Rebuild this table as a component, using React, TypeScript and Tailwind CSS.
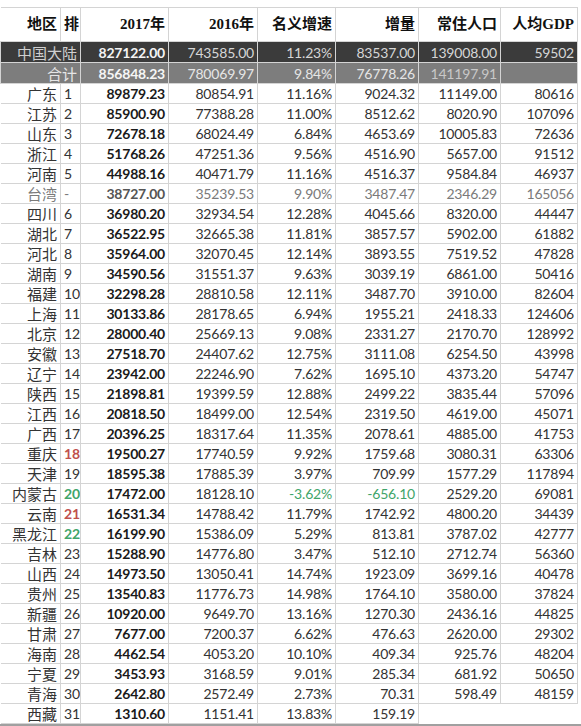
import React from "react"

type Row = {
  name: string
  rank: string
  rankColor?: "red" | "green"
  y2017: string
  y2016: string
  growth: string
  inc: string
  pop: string
  gdp: string
  muted?: boolean
  negative?: boolean
}

const rows: Row[] = [
  { name: "广东", rank: "1", y2017: "89879.23", y2016: "80854.91", growth: "11.16%", inc: "9024.32", pop: "11149.00", gdp: "80616" },
  { name: "江苏", rank: "2", y2017: "85900.90", y2016: "77388.28", growth: "11.00%", inc: "8512.62", pop: "8020.90", gdp: "107096" },
  { name: "山东", rank: "3", y2017: "72678.18", y2016: "68024.49", growth: "6.84%", inc: "4653.69", pop: "10005.83", gdp: "72636" },
  { name: "浙江", rank: "4", y2017: "51768.26", y2016: "47251.36", growth: "9.56%", inc: "4516.90", pop: "5657.00", gdp: "91512" },
  { name: "河南", rank: "5", y2017: "44988.16", y2016: "40471.79", growth: "11.16%", inc: "4516.37", pop: "9584.84", gdp: "46937" },
  { name: "台湾", rank: "-", y2017: "38727.00", y2016: "35239.53", growth: "9.90%", inc: "3487.47", pop: "2346.29", gdp: "165056", muted: true },
  { name: "四川", rank: "6", y2017: "36980.20", y2016: "32934.54", growth: "12.28%", inc: "4045.66", pop: "8320.00", gdp: "44447" },
  { name: "湖北", rank: "7", y2017: "36522.95", y2016: "32665.38", growth: "11.81%", inc: "3857.57", pop: "5902.00", gdp: "61882" },
  { name: "河北", rank: "8", y2017: "35964.00", y2016: "32070.45", growth: "12.14%", inc: "3893.55", pop: "7519.52", gdp: "47828" },
  { name: "湖南", rank: "9", y2017: "34590.56", y2016: "31551.37", growth: "9.63%", inc: "3039.19", pop: "6861.00", gdp: "50416" },
  { name: "福建", rank: "10", y2017: "32298.28", y2016: "28810.58", growth: "12.11%", inc: "3487.70", pop: "3910.00", gdp: "82604" },
  { name: "上海", rank: "11", y2017: "30133.86", y2016: "28178.65", growth: "6.94%", inc: "1955.21", pop: "2418.33", gdp: "124606" },
  { name: "北京", rank: "12", y2017: "28000.40", y2016: "25669.13", growth: "9.08%", inc: "2331.27", pop: "2170.70", gdp: "128992" },
  { name: "安徽", rank: "13", y2017: "27518.70", y2016: "24407.62", growth: "12.75%", inc: "3111.08", pop: "6254.50", gdp: "43998" },
  { name: "辽宁", rank: "14", y2017: "23942.00", y2016: "22246.90", growth: "7.62%", inc: "1695.10", pop: "4373.20", gdp: "54747" },
  { name: "陕西", rank: "15", y2017: "21898.81", y2016: "19399.59", growth: "12.88%", inc: "2499.22", pop: "3835.44", gdp: "57096" },
  { name: "江西", rank: "16", y2017: "20818.50", y2016: "18499.00", growth: "12.54%", inc: "2319.50", pop: "4619.00", gdp: "45071" },
  { name: "广西", rank: "17", y2017: "20396.25", y2016: "18317.64", growth: "11.35%", inc: "2078.61", pop: "4885.00", gdp: "41753" },
  { name: "重庆", rank: "18", rankColor: "red", y2017: "19500.27", y2016: "17740.59", growth: "9.92%", inc: "1759.68", pop: "3080.31", gdp: "63306" },
  { name: "天津", rank: "19", y2017: "18595.38", y2016: "17885.39", growth: "3.97%", inc: "709.99", pop: "1577.29", gdp: "117894" },
  { name: "内蒙古", rank: "20", rankColor: "green", y2017: "17472.00", y2016: "18128.10", growth: "-3.62%", inc: "-656.10", pop: "2529.20", gdp: "69081", negative: true },
  { name: "云南", rank: "21", rankColor: "red", y2017: "16531.34", y2016: "14788.42", growth: "11.79%", inc: "1742.92", pop: "4800.20", gdp: "34439" },
  { name: "黑龙江", rank: "22", rankColor: "green", y2017: "16199.90", y2016: "15386.09", growth: "5.29%", inc: "813.81", pop: "3787.02", gdp: "42777" },
  { name: "吉林", rank: "23", y2017: "15288.90", y2016: "14776.80", growth: "3.47%", inc: "512.10", pop: "2712.74", gdp: "56360" },
  { name: "山西", rank: "24", y2017: "14973.50", y2016: "13050.41", growth: "14.74%", inc: "1923.09", pop: "3699.16", gdp: "40478" },
  { name: "贵州", rank: "25", y2017: "13540.83", y2016: "11776.73", growth: "14.98%", inc: "1764.10", pop: "3580.00", gdp: "37824" },
  { name: "新疆", rank: "26", y2017: "10920.00", y2016: "9649.70", growth: "13.16%", inc: "1270.30", pop: "2436.16", gdp: "44825" },
  { name: "甘肃", rank: "27", y2017: "7677.00", y2016: "7200.37", growth: "6.62%", inc: "476.63", pop: "2620.00", gdp: "29302" },
  { name: "海南", rank: "28", y2017: "4462.54", y2016: "4053.20", growth: "10.10%", inc: "409.34", pop: "925.76", gdp: "48204" },
  { name: "宁夏", rank: "29", y2017: "3453.93", y2016: "3168.59", growth: "9.01%", inc: "285.34", pop: "681.92", gdp: "50650" },
  { name: "青海", rank: "30", y2017: "2642.80", y2016: "2572.49", growth: "2.73%", inc: "70.31", pop: "598.49", gdp: "48159" },
  { name: "西藏", rank: "31", y2017: "1310.60", y2016: "1151.41", growth: "13.83%", inc: "159.19", pop: "", gdp: "" },
]

const cell = "border border-[#d4d4d4] px-[3px] py-0 whitespace-nowrap overflow-hidden leading-[17px]"
const num = "font-['Lato','Noto_Sans_CJK_SC',sans-serif] text-[14px] tracking-[-0.2px]"
const cjk = "font-['Noto_Sans_CJK_SC',sans-serif] text-[15px]"

export default function App() {
  return (
    <div className="w-[581px] h-[726px] bg-white overflow-hidden flex flex-col">
      <div className="h-[7px] shrink-0" />
      <table className="table-fixed border-collapse w-[577px] text-[#333] leading-[17px]">
        <colgroup>
          <col className="w-[60px]" />
          <col className="w-[20px]" />
          <col className="w-[88px]" />
          <col className="w-[89px]" />
          <col className="w-[78px]" />
          <col className="w-[83px]" />
          <col className="w-[82px]" />
          <col className="w-[77px]" />
        </colgroup>
        <thead>
          <tr className="h-[34px] text-[#111] font-bold font-['Liberation_Serif','Noto_Sans_CJK_SC',serif] text-[15px]">
            <th className={`${cell} border-l-0 text-right`}>地区</th>
            <th className={`${cell} text-left px-[1px]`}>排</th>
            <th className={`${cell} text-right`}>2017年</th>
            <th className={`${cell} text-right`}>2016年</th>
            <th className={`${cell} text-right`}>名义增速</th>
            <th className={`${cell} text-right`}>增量</th>
            <th className={`${cell} text-right`}>常住人口</th>
            <th className={`${cell} text-right`}>人均GDP</th>
          </tr>
        </thead>
        <tbody>
          <tr className="h-[21px] bg-[#3b3b3b] text-[#d6d6d6]">
            <td colSpan={2} className={`${cell} border-[#3b3b3b] text-right ${cjk} text-[#cfcfcf]`}>中国大陆</td>
            <td className={`${cell} border-[#3b3b3b] text-right ${num} font-bold text-[#f4f4f4]`}>827122.00</td>
            <td className={`${cell} border-[#3b3b3b] text-right ${num}`}>743585.00</td>
            <td className={`${cell} border-[#3b3b3b] text-right ${num}`}>11.23%</td>
            <td className={`${cell} border-[#3b3b3b] text-right ${num}`}>83537.00</td>
            <td className={`${cell} border-[#3b3b3b] text-right ${num}`}>139008.00</td>
            <td className={`${cell} border-[#3b3b3b] text-right ${num}`}>59502</td>
          </tr>
          <tr className="h-[21px] bg-[#7d7d7d] text-[#e6e6e6]">
            <td colSpan={2} className={`${cell} border-[#7d7d7d] text-right ${cjk}`}>合计</td>
            <td className={`${cell} border-[#7d7d7d] text-right ${num} font-bold text-[#f6f6f6]`}>856848.23</td>
            <td className={`${cell} border-[#7d7d7d] text-right ${num}`}>780069.97</td>
            <td className={`${cell} border-[#7d7d7d] text-right ${num}`}>9.84%</td>
            <td className={`${cell} border-[#7d7d7d] text-right ${num}`}>76778.26</td>
            <td className={`${cell} border-[#7d7d7d] text-right ${num} text-[#c8c8c8]`}>141197.91</td>
            <td className={`${cell} border-[#7d7d7d] text-right ${num}`}></td>
          </tr>
          {rows.map((r) => {
            const tone = r.muted ? "text-[#7a7a7a]" : "text-[#333]"
            const rankTone =
              r.rankColor === "red" ? "text-[#c0504d] font-bold" : r.rankColor === "green" ? "text-[#3fa56a] font-bold" : tone
            const negTone = r.negative ? "text-[#3fa56a]" : tone
            const last = r.pop === ""
            return (
              <tr key={r.name} className="h-[20px]">
                <td className={`${cell} border-l-0 text-right ${cjk} ${tone}`}>{r.name}</td>
                <td className={`${cell} text-left px-[1px] ${num} ${rankTone}`}>{r.rank}</td>
                <td className={`${cell} text-right ${num} font-bold ${r.muted ? "text-[#555]" : "text-[#1a1a1a]"}`}>{r.y2017}</td>
                <td className={`${cell} text-right ${num} ${tone}`}>{r.y2016}</td>
                <td className={`${cell} text-right ${num} ${negTone}`}>{r.growth}</td>
                <td className={`${cell} text-right ${num} ${negTone}`}>{r.inc}</td>
                <td className={`${cell} text-right ${num} ${tone} ${last ? "border-b-0 border-r-0" : ""}`}>{r.pop}</td>
                <td className={`${cell} text-right ${num} ${tone} ${last ? "border-0" : ""}`}>{r.gdp}</td>
              </tr>
            )
          })}
        </tbody>
      </table>
      <div className="flex-1" />
      <div className="h-[3px] bg-[#a0a0a0] shrink-0" />
    </div>
  )
}
